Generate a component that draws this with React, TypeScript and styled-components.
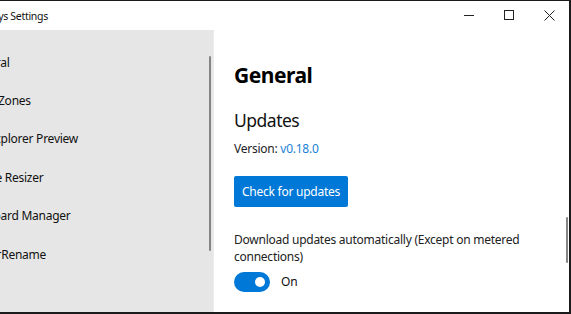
import React from 'react';
import styled, { createGlobalStyle } from 'styled-components';

const GlobalStyle = createGlobalStyle`
  html, body {
    margin: 0;
    padding: 0;
    background: #ffffff;
    overflow: hidden;
  }
  * { box-sizing: border-box; }
`;

const FONT = `"Segoe UI", "Noto Sans", "Open Sans", sans-serif`;

const Frame = styled.div`
  width: 571px;
  height: 314px;
  display: flex;
  flex-direction: column;
  background: #ffffff;
  border-top: 1px solid #1b1b1b;
  border-right: 2px solid #1b1b1b;
  border-bottom: 2px solid #1b1b1b;
  overflow: hidden;
  font-family: ${FONT};
  color: #1a1a1a;
`;

const TitleBar = styled.div`
  height: 29px;
  flex: none;
  display: flex;
  align-items: center;
`;

const Title = styled.div`
  margin-left: -42px;
  font-size: 10.5px;
  letter-spacing: -0.3px;
  white-space: nowrap;
  color: #111;
  flex: 1;
`;

const Caption = styled.div`
  display: flex;
  height: 100%;
`;

const CaptionButton = styled.div`
  width: 40px;
  height: 100%;
  display: flex;
  align-items: center;
  justify-content: center;
  svg { display: block; }
`;

const Body = styled.div`
  flex: 1;
  display: flex;
  min-height: 0;
`;

const Sidebar = styled.nav`
  width: 214px;
  flex: none;
  background: #e6e6e6;
  border-right: 1px solid #ededed;
  padding-top: 13px;
  position: relative;
  overflow: hidden;
`;

const NavItem = styled.div`
  height: 38.4px;
  display: flex;
  align-items: center;
  margin-left: -33px;
  font-size: 12px;
  letter-spacing: -0.25px;
  white-space: nowrap;
  color: #111;
`;

const Thumb = styled.div<{ $top: number; $height: number; $right: number }>`
  position: absolute;
  top: ${p => p.$top}px;
  right: ${p => p.$right}px;
  width: 2px;
  height: ${p => p.$height}px;
  background: #858585;
  border-radius: 1px;
`;

const Main = styled.main`
  flex: 1;
  position: relative;
  padding: 31px 0 0 20px;
  display: flex;
  flex-direction: column;
  align-items: flex-start;
`;

const PageTitle = styled.h1`
  margin: 0;
  font-size: 21px;
  line-height: 28px;
  letter-spacing: -0.5px;
  font-weight: 700;
  color: #000;
`;

const SectionTitle = styled.h2`
  margin: 19px 0 0;
  font-size: 17.5px;
  line-height: 24px;
  letter-spacing: -0.5px;
  font-weight: 400;
  color: #111;
`;

const Text = styled.div<{ $mt: number }>`
  margin-top: ${p => p.$mt}px;
  font-size: 12px;
  line-height: 17.5px;
  letter-spacing: -0.25px;
  color: #222;
`;

const Link = styled.span`
  color: #1a7fd6;
`;

const PrimaryButton = styled.button`
  margin-top: 18px;
  height: 31px;
  padding: 0 8px;
  border: none;
  border-radius: 2px;
  background: #0078d7;
  color: #fff;
  font-family: ${FONT};
  font-size: 12px;
  letter-spacing: -0.25px;
`;

const ToggleRow = styled.div`
  margin-top: 6px;
  display: flex;
  align-items: center;
  gap: 11px;
  font-size: 12px;
  color: #111;
`;

const Switch = styled.div`
  width: 36px;
  height: 20px;
  border-radius: 10px;
  background: #0078d7;
  display: flex;
  align-items: center;
  justify-content: flex-end;
  padding-right: 5px;
`;

const Knob = styled.div`
  width: 10px;
  height: 10px;
  border-radius: 50%;
  background: #fff;
`;

const navItems = ['General', 'FancyZones', 'File Explorer Preview', 'Image Resizer', 'Keyboard Manager', 'PowerRename'];

export default function App(): JSX.Element {
  return (
    <>
      <GlobalStyle />
      <Frame>
        <TitleBar>
          <Title>PowerToys Settings</Title>
          <Caption>
            <CaptionButton>
              <svg width="11" height="11" viewBox="0 0 11 11">
                <path d="M0 5.5h10" stroke="#222" strokeWidth="1" />
              </svg>
            </CaptionButton>
            <CaptionButton>
              <svg width="11" height="11" viewBox="0 0 11 11">
                <rect x="0.5" y="0.5" width="9" height="9" fill="none" stroke="#222" strokeWidth="1" />
              </svg>
            </CaptionButton>
            <CaptionButton>
              <svg width="11" height="11" viewBox="0 0 11 11">
                <path d="M0.5 0.5l10 10M10.5 0.5l-10 10" stroke="#222" strokeWidth="1" />
              </svg>
            </CaptionButton>
          </Caption>
        </TitleBar>
        <Body>
          <Sidebar>
            {navItems.map(item => (
              <NavItem key={item}>{item}</NavItem>
            ))}
            <Thumb $top={26} $height={195} $right={2} />
          </Sidebar>
          <Main>
            <PageTitle>General</PageTitle>
            <SectionTitle>Updates</SectionTitle>
            <Text $mt={8}>
              Version: <Link>v0.18.0</Link>
            </Text>
            <PrimaryButton>Check for updates</PrimaryButton>
            <Text $mt={24}>
              Download updates automatically (Except on metered
              <br />
              connections)
            </Text>
            <ToggleRow>
              <Switch>
                <Knob />
              </Switch>
              On
            </ToggleRow>
            <Thumb $top={187} $height={46} $right={1} />
          </Main>
        </Body>
      </Frame>
    </>
  );
}
